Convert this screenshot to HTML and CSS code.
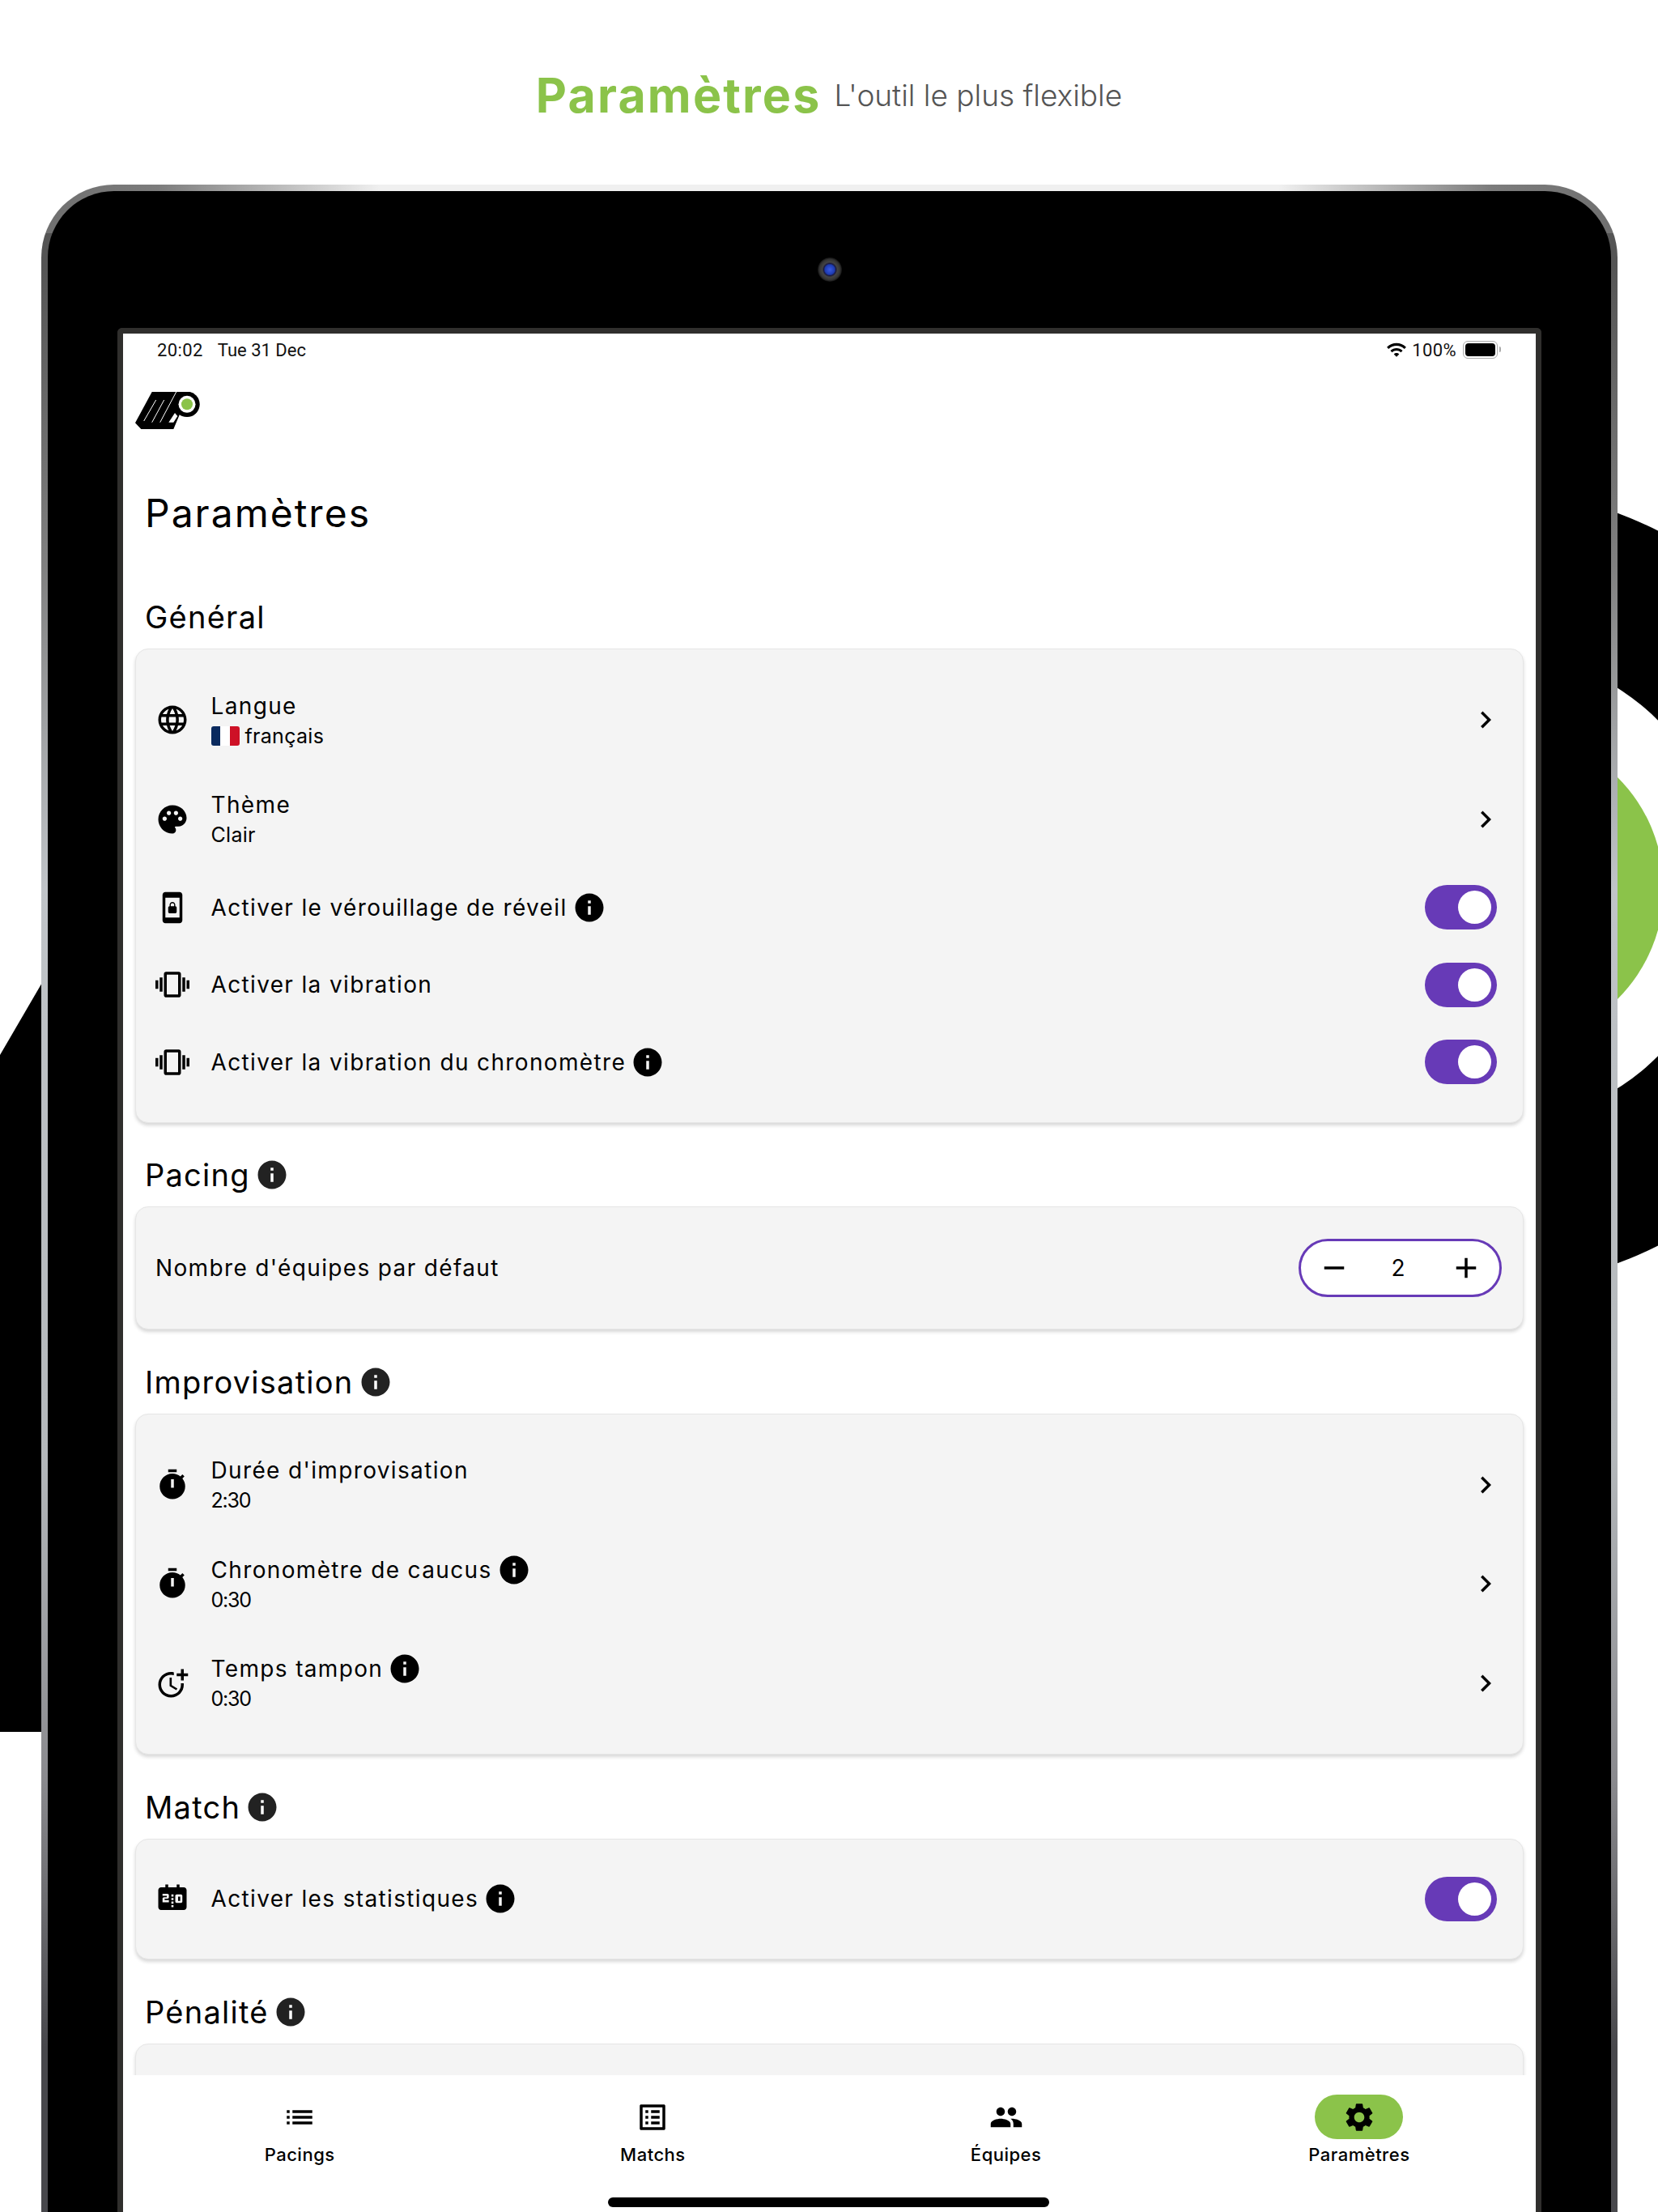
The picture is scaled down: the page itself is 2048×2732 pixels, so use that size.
FILE: index.html
```html
<!DOCTYPE html>
<html lang="fr">
<head>
    <meta charset="UTF-8">
    <title>Paramètres</title>
    <link rel="stylesheet" href="styles.css">
</head>
<body>
    <svg width="0" height="0" class="defs">
        <symbol id="i-lang" viewBox="0 0 24 24"><path d="M11.99 2C6.47 2 2 6.48 2 12s4.47 10 9.99 10C17.52 22 22 17.52 22 12S17.52 2 11.99 2zm6.93 6h-2.95c-.32-1.25-.78-2.45-1.38-3.56 1.84.63 3.37 1.91 4.33 3.56zM12 4.04c.83 1.2 1.48 2.53 1.91 3.96h-3.82c.43-1.43 1.08-2.76 1.91-3.96zM4.26 14C4.1 13.36 4 12.69 4 12s.1-1.36.26-2h3.38c-.08.66-.14 1.32-.14 2 0 .68.06 1.34.14 2H4.26zm.82 2h2.95c.32 1.25.78 2.45 1.38 3.56-1.84-.63-3.37-1.9-4.33-3.56zm2.95-8H5.08c.96-1.66 2.49-2.93 4.33-3.56C8.81 5.55 8.35 6.75 8.03 8zM12 19.96c-.83-1.2-1.48-2.53-1.91-3.96h3.82c-.43 1.43-1.08 2.76-1.91 3.96zM14.34 14H9.66c-.09-.66-.16-1.32-.16-2 0-.68.07-1.35.16-2h4.68c.09.65.16 1.32.16 2 0 .68-.07 1.34-.16 2zm.25 5.56c.6-1.11 1.06-2.31 1.38-3.56h2.95c-.96 1.65-2.49 2.93-4.33 3.56zM16.36 14c.08-.66.14-1.32.14-2 0-.68-.06-1.34-.14-2h3.38c.16.64.26 1.31.26 2s-.1 1.36-.26 2h-3.38z"/></symbol>
        <symbol id="i-palette" viewBox="0 0 24 24"><path d="M12 2C6.49 2 2 6.49 2 12s4.49 10 10 10c1.38 0 2.5-1.12 2.5-2.5 0-.61-.23-1.2-.64-1.67-.08-.1-.13-.21-.13-.33 0-.28.22-.5.5-.5H16c3.31 0 6-2.69 6-6 0-4.96-4.49-9-10-9zm5.5 11c-.83 0-1.5-.67-1.5-1.5s.67-1.5 1.5-1.5 1.5.67 1.5 1.5-.67 1.5-1.5 1.5zm-3-4c-.83 0-1.5-.67-1.5-1.5S13.67 6 14.5 6s1.5.67 1.5 1.5S15.33 9 14.5 9zM5 11.5c0-.83.67-1.5 1.5-1.5s1.5.67 1.5 1.5S7.33 13 6.5 13 5 12.33 5 11.5zm6-4c0 .83-.67 1.5-1.5 1.5S8 8.33 8 7.5 8.67 6 9.5 6s1.5.67 1.5 1.5z"/></symbol>
        <symbol id="i-lock" viewBox="0 0 24 24"><path d="M10 16h4c.55 0 1-.45 1-1v-3c0-.55-.45-1-1-1v-1c0-1.11-.9-2-2-2-1.11 0-2 .9-2 2v1c-.55 0-1 .45-1 1v3c0 .55.45 1 1 1zm.8-6c0-.66.54-1.2 1.2-1.2s1.2.54 1.2 1.2v1h-2.4v-1zM17 1H7c-1.1 0-2 .9-2 2v18c0 1.1.9 2 2 2h10c1.1 0 2-.9 2-2V3c0-1.1-.9-2-2-2zm0 18H7V5h10v14z"/></symbol>
        <symbol id="i-vibration" viewBox="0 0 24 24"><path d="M0 15h2V9H0v6zm3 2h2V7H3v10zm19-8v6h2V9h-2zm-3 8h2V7h-2v10zM16.5 3h-9C6.67 3 6 3.67 6 4.5v15c0 .83.67 1.5 1.5 1.5h9c.83 0 1.5-.67 1.5-1.5v-15c0-.83-.67-1.5-1.5-1.5zM16 19H8V5h8v14z"/></symbol>
        <symbol id="i-timer" viewBox="0 0 24 24"><path d="M9 1h6v2H9zm10.03 6.39l1.42-1.42c-.43-.51-.9-.99-1.41-1.41l-1.42 1.42C16.07 4.74 14.12 4 12 4c-4.97 0-9 4.03-9 9s4.02 9 9 9 9-4.03 9-9c0-2.12-.74-4.07-1.97-5.61zM13 14h-2V8h2v6z"/></symbol>
        <symbol id="i-more-time" viewBox="0 0 24 24"><path d="M10 8v6l4.7 2.9.8-1.2-4-2.4V8zM17.92 12c.05.33.08.66.08 1 0 3.9-3.1 7-7 7s-7-3.1-7-7 3.1-7 7-7c.7 0 1.37.1 2 .29V4.23C12.36 4.08 11.69 4 11 4c-5 0-9 4-9 9s4 9 9 9 9-4 9-9c0-.34-.02-.67-.06-1h-2.02zM20 5V2h-2v3h-3v2h3v3h2V7h3V5z"/></symbol>
        <symbol id="i-score" viewBox="0 0 24 24"><path d="M17.5 13.5H16v-3h1.5v3zM20 4h-3V2h-2v2H9V2H7v2H4c-1.1 0-2 .9-2 2v12c0 1.1.9 2 2 2h16c1.1 0 2-.9 2-2V6c0-1.1-.9-2-2-2zM9.5 11c0 .55-.45 1-1 1h-2v1h3v1.5H5V12c0-.55.45-1 1-1h2v-1H5V8.5h3.5c.55 0 1 .45 1 1V11zm3.25 7h-1.5v-1.5h1.5V18zm0-2.5h-1.5V14h1.5v1.5zm0-2.5h-1.5v-1.5h1.5V13zm0-2.5h-1.5V9h1.5v1.5zM19 14c0 .55-.45 1-1 1h-3c-.55 0-1-.45-1-1v-4c0-.55.45-1 1-1h3c.55 0 1 .45 1 1v4z"/></symbol>
        <symbol id="i-info" viewBox="0 0 24 24"><path d="M12 2C6.48 2 2 6.48 2 12s4.48 10 10 10 10-4.48 10-10S17.52 2 12 2zm1 15h-2v-6h2v6zm0-8h-2V7h2v2z"/></symbol>
        <symbol id="i-chevron" viewBox="0 0 24 24"><path d="M10 6L8.59 7.41 13.17 12l-4.58 4.59L10 18l6-6z"/></symbol>
        <symbol id="i-add" viewBox="0 0 24 24"><path d="M19 13h-6v6h-2v-6H5v-2h6V5h2v6h6v2z"/></symbol>
        <symbol id="i-remove" viewBox="0 0 24 24"><path d="M19 13H5v-2h14v2z"/></symbol>
        <symbol id="i-list" viewBox="0 0 24 24"><path d="M3 13h2v-2H3v2zm0 4h2v-2H3v2zm0-8h2V7H3v2zm4 4h14v-2H7v2zm0 4h14v-2H7v2zM7 7v2h14V7H7z"/></symbol>
        <symbol id="i-list-alt" viewBox="0 0 24 24"><path d="M19 5v14H5V5h14m1.1-2H3.9c-.5 0-.9.4-.9.9v16.2c0 .4.4.9.9.9h16.2c.4 0 .9-.5.9-.9V3.9c0-.5-.5-.9-.9-.9zM11 7h6v2h-6V7zm0 4h6v2h-6v-2zm0 4h6v2h-6zM7 7h2v2H7zm0 4h2v2H7zm0 4h2v2H7z"/></symbol>
        <symbol id="i-people" viewBox="0 0 24 24"><path d="M16 11c1.66 0 2.99-1.34 2.99-3S17.66 5 16 5c-1.66 0-3 1.34-3 3s1.34 3 3 3zm-8 0c1.66 0 2.99-1.34 2.99-3S9.66 5 8 5C6.34 5 5 6.34 5 8s1.34 3 3 3zm0 2c-2.33 0-7 1.17-7 3.5V19h14v-2.5c0-2.33-4.67-3.5-7-3.5zm8 0c-.29 0-.62.02-.97.05 1.16.84 1.97 1.97 1.97 3.45V19h6v-2.5c0-2.33-4.67-3.5-7-3.5z"/></symbol>
        <symbol id="i-settings" viewBox="0 0 24 24"><path d="M19.14 12.94c.04-.3.06-.61.06-.94 0-.32-.02-.64-.07-.94l2.03-1.58c.18-.14.23-.41.12-.61l-1.92-3.32c-.12-.22-.37-.29-.59-.22l-2.39.96c-.5-.38-1.03-.7-1.62-.94l-.36-2.54c-.04-.24-.24-.41-.48-.41h-3.84c-.24 0-.43.17-.47.41l-.36 2.54c-.59.24-1.13.57-1.62.94l-2.39-.96c-.22-.08-.47 0-.59.22L2.74 8.87c-.12.21-.08.47.12.61l2.03 1.58c-.05.3-.09.63-.09.94s.02.64.07.94l-2.03 1.58c-.18.14-.23.41-.12.61l1.92 3.32c.12.22.37.29.59.22l2.39-.96c.5.38 1.03.7 1.62.94l.36 2.54c.05.24.24.41.48.41h3.84c.24 0 .44-.17.47-.41l.36-2.54c.59-.24 1.13-.56 1.62-.94l2.39.96c.22.08.47 0 .59-.22l1.92-3.32c.12-.22.07-.47-.12-.61l-2.01-1.58zM12 15.6c-1.98 0-3.6-1.62-3.6-3.6s1.62-3.6 3.6-3.6 3.6 1.62 3.6 3.6-1.62 3.6-3.6 3.6z"/></symbol>
        <symbol id="i-wifi" viewBox="0 0 24 24"><path d="M1 9l2 2c4.97-4.97 13.03-4.97 18 0l2-2C16.93 2.93 7.08 2.93 1 9zm8 8l3 3 3-3c-1.65-1.66-4.34-1.66-6 0zm-4-4l2 2c2.76-2.76 7.24-2.76 10 0l2-2C15.14 9.14 8.87 9.14 5 13z"/></symbol>
    </svg>

    <!-- logo shapes behind the tablet -->
    <svg class="backdrop" viewBox="0 0 2048 2732">
        <polygon points="0,1303 60,1200 60,2139 0,2139"/>
        <circle cx="1824" cy="1097" r="495"/>
        <circle cx="1841" cy="1097" r="293" fill="#fff"/>
        <circle cx="1862" cy="1097" r="193" fill="#8bc34a"/>
    </svg>

    <header class="hero">
        <span class="hero-title">Paramètres</span>
        <span class="hero-sub">L'outil le plus flexible</span>
    </header>

    <div class="device">
        <div class="bezel">
            <div class="camera"></div>
            <div class="screen">
                <div class="status">
                    <span class="status-time">20:02</span>
                    <span class="status-date">Tue 31 Dec</span>
                    <span class="status-right">
                        <svg class="wifi"><use href="#i-wifi"/></svg>
                        <span>100%</span>
                        <span class="battery"><span class="battery-fill"></span></span>
                    </span>
                </div>

                <svg class="logo" viewBox="0 0 80 46">
                    <path d="M20.7 0H67V26H55.7L47.3 46H7.3L0 38.3Z"/>
                    <circle cx="64" cy="15.3" r="15.7"/>
                    <circle cx="64" cy="15.3" r="10.5" fill="#fff"/>
                    <circle cx="64" cy="15.3" r="7" fill="#8bc34a"/>
                    <path d="M41.3 37.7L49 26L52.3 30L47.3 37.7Z" fill="#fff"/>
                    <path d="M10.7 36L25.7 10M20.7 37.7L35.7 10M30.7 37.7L50.7 0" stroke="#fff" stroke-width="1" fill="none"/>
                </svg>

                <h1 class="page-title">Paramètres</h1>

                <section class="section section-first">
                    <h2 class="section-head">Général</h2>
                    <div class="card">
                        <div class="row row-tall">
                            <svg class="icon"><use href="#i-lang"/></svg>
                            <div class="row-text">
                                <div class="row-title">Langue</div>
                                <div class="row-sub"><span class="flag"><i class="flag-blue"></i><i class="flag-white"></i><i class="flag-red"></i></span>français</div>
                            </div>
                            <svg class="icon chevron"><use href="#i-chevron"/></svg>
                        </div>
                        <div class="row row-tall">
                            <svg class="icon"><use href="#i-palette"/></svg>
                            <div class="row-text">
                                <div class="row-title">Thème</div>
                                <div class="row-sub">Clair</div>
                            </div>
                            <svg class="icon chevron"><use href="#i-chevron"/></svg>
                        </div>
                        <div class="row">
                            <svg class="icon"><use href="#i-lock"/></svg>
                            <div class="row-text">
                                <div class="row-title">Activer le vérouillage de réveil<svg class="icon info"><use href="#i-info"/></svg></div>
                            </div>
                            <div class="toggle"><span class="knob"></span></div>
                        </div>
                        <div class="row">
                            <svg class="icon"><use href="#i-vibration"/></svg>
                            <div class="row-text">
                                <div class="row-title">Activer la vibration</div>
                            </div>
                            <div class="toggle"><span class="knob"></span></div>
                        </div>
                        <div class="row">
                            <svg class="icon"><use href="#i-vibration"/></svg>
                            <div class="row-text">
                                <div class="row-title">Activer la vibration du chronomètre<svg class="icon info"><use href="#i-info"/></svg></div>
                            </div>
                            <div class="toggle"><span class="knob"></span></div>
                        </div>
                    </div>
                </section>

                <section class="section">
                    <h2 class="section-head">Pacing<svg class="icon info info-head"><use href="#i-info"/></svg></h2>
                    <div class="card">
                        <div class="row row-stepper">
                            <div class="row-text row-text-flush">
                                <div class="row-title">Nombre d'équipes par défaut</div>
                            </div>
                            <div class="stepper">
                                <svg class="icon"><use href="#i-remove"/></svg>
                                <span class="stepper-value">2</span>
                                <svg class="icon"><use href="#i-add"/></svg>
                            </div>
                        </div>
                    </div>
                </section>

                <section class="section">
                    <h2 class="section-head">Improvisation<svg class="icon info info-head"><use href="#i-info"/></svg></h2>
                    <div class="card">
                        <div class="row row-tall">
                            <svg class="icon"><use href="#i-timer"/></svg>
                            <div class="row-text">
                                <div class="row-title">Durée d'improvisation</div>
                                <div class="row-sub row-sub-time">2:30</div>
                            </div>
                            <svg class="icon chevron"><use href="#i-chevron"/></svg>
                        </div>
                        <div class="row row-tall">
                            <svg class="icon"><use href="#i-timer"/></svg>
                            <div class="row-text">
                                <div class="row-title">Chronomètre de caucus<svg class="icon info"><use href="#i-info"/></svg></div>
                                <div class="row-sub row-sub-time">0:30</div>
                            </div>
                            <svg class="icon chevron"><use href="#i-chevron"/></svg>
                        </div>
                        <div class="row row-tall">
                            <svg class="icon"><use href="#i-more-time"/></svg>
                            <div class="row-text">
                                <div class="row-title">Temps tampon<svg class="icon info"><use href="#i-info"/></svg></div>
                                <div class="row-sub row-sub-time">0:30</div>
                            </div>
                            <svg class="icon chevron"><use href="#i-chevron"/></svg>
                        </div>
                    </div>
                </section>

                <section class="section">
                    <h2 class="section-head">Match<svg class="icon info info-head"><use href="#i-info"/></svg></h2>
                    <div class="card">
                        <div class="row">
                            <svg class="icon"><use href="#i-score"/></svg>
                            <div class="row-text">
                                <div class="row-title">Activer les statistiques<svg class="icon info"><use href="#i-info"/></svg></div>
                            </div>
                            <div class="toggle"><span class="knob"></span></div>
                        </div>
                    </div>
                </section>

                <section class="section">
                    <h2 class="section-head">Pénalité<svg class="icon info info-head"><use href="#i-info"/></svg></h2>
                    <div class="card card-cut"></div>
                </section>

                <nav class="tabs">
                    <div class="tab">
                        <span class="tab-icon"><svg class="icon"><use href="#i-list"/></svg></span>
                        <span class="tab-label">Pacings</span>
                    </div>
                    <div class="tab">
                        <span class="tab-icon"><svg class="icon"><use href="#i-list-alt"/></svg></span>
                        <span class="tab-label">Matchs</span>
                    </div>
                    <div class="tab">
                        <span class="tab-icon"><svg class="icon"><use href="#i-people"/></svg></span>
                        <span class="tab-label">Équipes</span>
                    </div>
                    <div class="tab">
                        <span class="tab-icon tab-active"><svg class="icon"><use href="#i-settings"/></svg></span>
                        <span class="tab-label">Paramètres</span>
                    </div>
                    <div class="home-bar"></div>
                </nav>
            </div>
        </div>
    </div>
</body>
</html>
```

FILE: styles.css
```css
*{
    box-sizing: border-box;
}
html, body{
    margin: 0;
    padding: 0;
}
body{
    position: relative;
    width: 2048px;
    height: 2732px;
    overflow: hidden;
    background-color: #fff;
    font-family: "Inter", "Liberation Sans", sans-serif;
    color: #000;
}
.defs{
    position: absolute;
}
.backdrop{
    position: absolute;
    left: 0;
    top: 0;
    width: 2048px;
    height: 2732px;
}

/* heading over the tablet */
.hero{
    position: relative;
    height: 228px;
    padding-top: 6px;
    display: flex;
    justify-content: center;
    align-items: center;
    gap: 16px;
}
.hero-title{
    font-size: 59px;
    font-weight: 700;
    letter-spacing: 2.2px;
    color: #8bc34a;
}
.hero-sub{
    font-size: 37px;
    font-weight: 300;
    color: #555;
}

/* tablet */
.device{
    position: relative;
    width: 1947px;
    height: 2504px;
    margin-left: 51px;
    padding: 8px 8px 0;
    border-radius: 90px 90px 0 0;
    background:
        linear-gradient(90deg, #6f6f6f 0, #7c7c7c 7.4%, #f0f0f0 21.5%, #f0f0f0 78.5%, #7c7c7c 92%, #6f6f6f 100%) top / 100% 60px no-repeat,
        linear-gradient(180deg, #555 0, #555 100px, #808080 470px, #c0c4c8 870px, #b4b8bb 1570px, #8a8a8e 1970px, #48484c 2300px);
}
.bezel{
    height: 100%;
    padding: 0 86px;
    border-radius: 82px 82px 0 0;
    background-color: #000;
    display: flex;
    flex-direction: column;
    align-items: center;
}
.camera{
    width: 30px;
    height: 30px;
    margin: 82px 0 57px;
    flex: none;
    border-radius: 50%;
    background: radial-gradient(circle closest-side, #3a5ae0 0, #1c3ab0 40%, #1a1a40 50%, #444 62%, #333 85%, #111 100%);
}
.screen{
    position: relative;
    flex: 1;
    width: 100%;
    min-height: 0;
    overflow: hidden;
    background-color: #fff;
    border: 7px solid #302f2d;
    border-bottom: 0;
    border-radius: 6px 6px 0 0;
}

/* status bar */
.status{
    height: 40px;
    padding: 0 47px 0 42px;
    display: flex;
    align-items: center;
    font-family: "Roboto", sans-serif;
    font-size: 22px;
    letter-spacing: .4px;
    color: #111;
}
.status-date{
    margin-left: 18px;
    letter-spacing: 0;
}
.status-right{
    margin-left: auto;
    display: flex;
    align-items: center;
    gap: 6px;
}
.wifi{
    width: 26px;
    height: 26px;
    fill: #000;
}
.battery{
    position: relative;
    width: 43px;
    height: 22px;
    margin-left: 2px;
    padding: 2px;
    border: 1.5px solid #aaa;
    border-radius: 6px;
    display: block;
}
.battery::after{
    content: "";
    position: absolute;
    right: -5px;
    top: 6px;
    width: 2px;
    height: 7px;
    border-radius: 0 2px 2px 0;
    background-color: #aaa;
}
.battery-fill{
    display: block;
    height: 100%;
    border-radius: 4px;
    background-color: #000;
}

.logo{
    display: block;
    width: 80px;
    height: 46px;
    margin: 32px 0 0 15px;
}
.page-title{
    margin: 68px 0 0 27px;
    font-size: 48px;
    line-height: 72px;
    font-weight: 400;
    letter-spacing: 2px;
}

/* sections */
.section{
    margin: 47.5px 15px 0;
}
.section-first{
    margin-top: 75px;
}
.section-head{
    margin: 0 0 16px 12px;
    height: 40px;
    padding-bottom: 6px;
    display: flex;
    align-items: center;
    font-size: 38px;
    line-height: 40px;
    font-weight: 400;
    letter-spacing: 1.25px;
}
.card{
    padding: 26px 32px 26px 24px;
    background-color: #f4f4f4;
    border: 1px solid #e6e6e6;
    border-radius: 16px;
    box-shadow: 0 3px 4px rgba(0, 0, 0, .16);
}
.card-cut{
    height: 200px;
}
.row{
    height: 95.5px;
    display: flex;
    align-items: center;
}
.row-tall{
    height: 122.5px;
}
.row-tall .row-text{
    margin-top: 2px;
}
.row-stepper{
    height: 98px;
}
.row-text{
    margin-left: 26.5px;
    flex: 1;
}
.row-text-flush{
    margin-left: 0;
}
.row-title{
    display: flex;
    align-items: center;
    height: 37px;
    font-size: 28px;
    letter-spacing: 1.35px;
}
.row-sub{
    display: flex;
    align-items: center;
    height: 37px;
    font-size: 25px;
    letter-spacing: .3px;
}
.row-sub-time{
    letter-spacing: -1.2px;
}
.icon{
    width: 42px;
    height: 42px;
    flex: none;
    fill: #000;
}
.info{
    margin-left: 6px;
}
.info-head{
    fill: #222;
}
.chevron{
    margin-right: -7px;
}
.flag{
    width: 35px;
    height: 24px;
    margin-right: 7px;
    border-radius: 3px;
    overflow: hidden;
    display: flex;
}
.flag i{
    flex: 1;
}
.flag-blue{
    background-color: #0a2a5e;
}
.flag-white{
    background-color: #fff;
}
.flag-red{
    background-color: #ce1126;
}
.toggle{
    width: 89px;
    height: 55px;
    padding: 7px;
    border-radius: 28px;
    background-color: #673ab7;
    display: flex;
    justify-content: flex-end;
}
.knob{
    width: 41px;
    height: 41px;
    border-radius: 50%;
    background-color: #fff;
}
.stepper{
    width: 251px;
    height: 72px;
    margin-right: -6px;
    padding: 0 20px;
    border: 3px solid #673ab7;
    border-radius: 36px;
    background-color: #fff;
    display: flex;
    align-items: center;
    justify-content: space-between;
}
.stepper-value{
    margin-right: 5px;
    font-size: 28px;
}

/* tab bar sits over the scrolled content */
.tabs{
    position: absolute;
    left: 0;
    right: 0;
    bottom: 0;
    height: 169px;
    background-color: #fff;
    display: grid;
    grid-template-columns: repeat(4, 1fr);
    align-items: start;
}
.tab{
    padding-top: 24px;
    display: flex;
    flex-direction: column;
    align-items: center;
}
.tab-icon{
    width: 109px;
    height: 55px;
    border-radius: 28px;
    display: flex;
    justify-content: center;
    align-items: center;
}
.tab-active{
    background-color: #8bc34a;
}
.tab-label{
    margin-top: 4px;
    line-height: 30px;
    font-size: 22px;
    font-weight: 500;
    letter-spacing: .5px;
}
.home-bar{
    position: absolute;
    left: 599px;
    bottom: 6px;
    width: 545px;
    height: 12px;
    border-radius: 6px;
    background-color: #000;
}
```
